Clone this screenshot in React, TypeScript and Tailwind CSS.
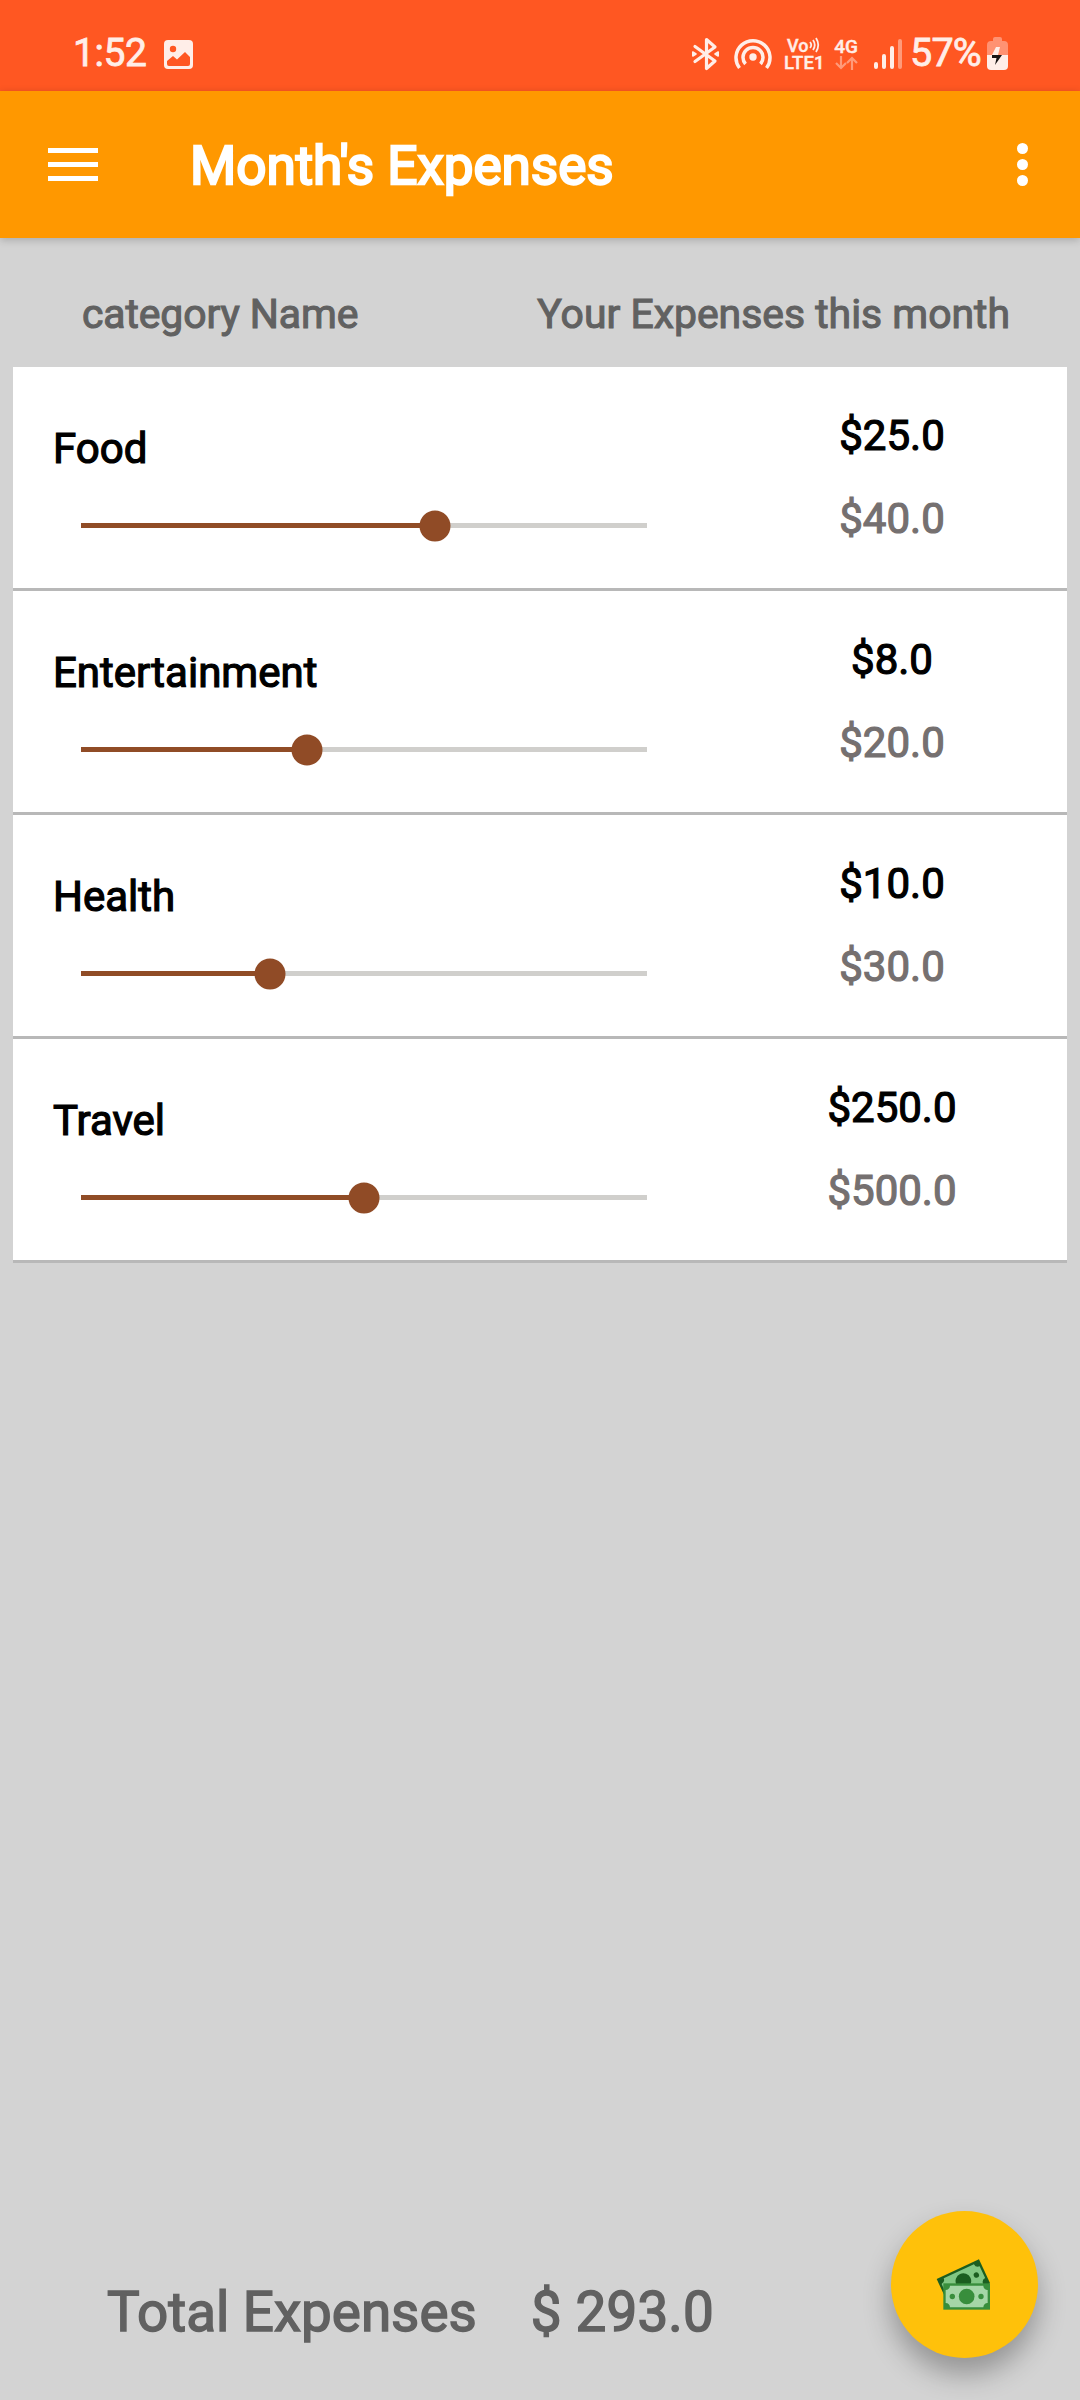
import React from "react";

type Category = { name: string; spent: number; budget: number };

const categories: Category[] = [
  { name: "Food", spent: 25, budget: 40 },
  { name: "Entertainment", spent: 8, budget: 20 },
  { name: "Health", spent: 10, budget: 30 },
  { name: "Travel", spent: 250, budget: 500 },
];

function StatusBar() {
  return (
    <header className="flex h-[91px] items-center bg-[#ff5722] pt-[16px] text-[#ffeee8]">
      <span className="mb-px ml-[73px] w-[74px] whitespace-nowrap text-[39px] leading-[40px] tracking-[-0.4px] [-webkit-text-stroke:0.8px_#ffeee8]">1:52</span>
      <svg className="ml-[17px] mt-[1px] h-[29px] w-[29px]" viewBox="0 0 29 29">
        <rect width="29" height="29" rx="4" fill="#ffeee8" />
        <circle cx="9" cy="9" r="3.2" fill="#ff5722" />
        <path d="M3 24V21L9 16L13 19.5L21 12L26 17V24Q26 26 24 26H5Q3 26 3 24Z" fill="#ff5722" />
      </svg>
      <svg className="ml-[498px] h-[34px] w-[29px]" viewBox="0 0 29 34" fill="none" stroke="#ffeee8" strokeWidth="3.200" strokeLinejoin="round" strokeLinecap="round">
        <path d="M4 9.500L24 24L15.500 31.500V2.500L24 10L4 24.500" />
        <path d="M1.800 15V19L5 17ZM27.200 15V19L24 17Z" strokeWidth="1.600" fill="#ffeee8" />
      </svg>
      <svg className="ml-[14px] h-[34px] w-[38px]" viewBox="0 0 38 34" fill="none" stroke="#ffeee8" strokeWidth="3.500">
        <path d="M5.500 31A17 17 0 1 1 32.500 31" />
        <path d="M11.500 27A10 10 0 1 1 26.500 27" />
        <circle cx="19" cy="20" r="3.700" fill="#ffeee8" stroke="none" />
      </svg>
      <div className="ml-[12px] flex w-[39px] flex-col whitespace-nowrap font-medium [-webkit-text-stroke:0.4px_#ffeee8]">
        <div className="flex h-[17px] items-center pl-[3px] text-[18px] leading-[17px]">
          Vo
          <svg className="ml-[1px] h-[16px] w-[11px]" viewBox="0 0 11 16" fill="none" stroke="#ffeee8" strokeWidth="1.800">
            <path d="M1 5Q3.500 8 1 11M4 3Q7.500 8 4 13M7 1Q11.500 8 7 15" />
          </svg>
        </div>
        <span className="h-[17px] text-[18.5px] leading-[19px] tracking-[0.2px]">LTE1</span>
      </div>
      <div className="ml-[10px] flex w-[26px] flex-col items-center font-medium [-webkit-text-stroke:0.4px_#ffeee8]">
        <span className="h-[18px] text-[19px] leading-[17px]">4G</span>
        <svg className="h-[14px] w-[24px]" viewBox="0 0 24 14" fill="none" stroke="#ff9a7a" strokeWidth="2.200">
          <path d="M7 0V12M2 7L7 12L12 7M18 14V2M13 7L18 2L23 7" />
        </svg>
      </div>
      <svg className="ml-[15px] h-[30px] w-[29px]" viewBox="0 0 29 30" strokeWidth="4" strokeLinecap="round" stroke="#ffeee8">
        <path d="M2 25V28M10 17V28M18 9V28" />
        <path d="M26 2V28" stroke="#ff9a7a" />
      </svg>
      <span className="mb-px ml-[7px] w-[73px] whitespace-nowrap text-[39.5px] leading-[40px] tracking-[-0.8px] [-webkit-text-stroke:0.8px_#ffeee8]">57%</span>
      <svg className="ml-[4px] h-[33px] w-[21px]" viewBox="0 0 21 33">
        <path d="M6 4V2Q6 0 8 0H13Q15 0 15 2V4H17Q21 4 21 8V18H0V8Q0 4 4 4Z" fill="#ff9272" />
        <path d="M0 18H21V29Q21 33 17 33H4Q0 33 0 29Z" fill="#ffeee8" />
        <path d="M9 10H13L11 18H5Z" fill="#ffeee8" />
        <path d="M5 18H15L8 28L9.500 21H5Z" fill="#181414" />
      </svg>
    </header>
  );
}

function AppBar() {
  return (
    <nav className="relative z-10 flex h-[147px] items-center bg-[#ff9800] text-white shadow-[0_2px_8px_rgba(0,0,0,0.2)]">
      <button aria-label="Open menu" className="ml-[48px] flex w-[50px] flex-col gap-[9px]">
        <span className="h-[5px] bg-white" />
        <span className="h-[5px] bg-white" />
        <span className="h-[5px] bg-white" />
      </button>
      <h1 className="ml-[92px] mt-[2px] whitespace-nowrap text-[53px] leading-[60px] [-webkit-text-stroke:2.3px_#fff]">Month's Expenses</h1>
      <button aria-label="More options" className="ml-auto mr-[52px] flex w-[11px] flex-col gap-[5px]">
        <span className="h-[11px] rounded-full bg-white" />
        <span className="h-[11px] rounded-full bg-white" />
        <span className="h-[11px] rounded-full bg-white" />
      </button>
    </nav>
  );
}

function BudgetSlider({ ratio }: { ratio: number }) {
  const percent = `${ratio * 100}%`;
  return (
    <div className="relative ml-[42px] h-[5px] w-[566px] bg-[#d0cfcc]">
      <div className="h-full bg-[#904c26]" style={{ width: percent }} />
      <div className="absolute top-1/2 h-[31px] w-[31px] -translate-x-1/2 -translate-y-1/2 rounded-full bg-[#904b26]" style={{ left: percent }} />
    </div>
  );
}

function CategoryRow({ name, spent, budget }: Category) {
  return (
    <li className="flex h-[224px] border-b-[3px] border-[#b8b8b8] bg-white pl-[26px] text-[42px] leading-[52px]">
      <div className="flex w-[650px] flex-col pt-[56px]">
        <span className="h-[100px] pl-[14px] text-black [-webkit-text-stroke:1.2px_#000]">{name}</span>
        <BudgetSlider ratio={spent / budget} />
      </div>
      <div className="ml-[85px] flex w-[236px] flex-col items-center gap-[31px] pt-[43px]">
        <span className="text-black [-webkit-text-stroke:1.2px_#000]">${spent.toFixed(1)}</span>
        <span className="text-[#757070] [-webkit-text-stroke:1.2px_#757070]">${budget.toFixed(1)}</span>
      </div>
    </li>
  );
}

/** One banknote, 140 by 79 units, with notched corners and three seals. */
function Banknote({ dark, light, transform }: { dark: string; light: string; transform: string }) {
  return (
    <g transform={transform}>
      <rect width="140" height="79" fill={dark} />
      <path
        d="M20 7H120A14 14 0 0 0 133 20V59A14 14 0 0 0 120 72H20A14 14 0 0 0 7 59V20A14 14 0 0 0 20 7Z"
        fill={light}
      />
      <circle cx="70" cy="39.500" r="23.500" fill={dark} />
      <circle cx="27" cy="39.500" r="8" fill={dark} />
      <circle cx="113" cy="39.500" r="8" fill={dark} />
    </g>
  );
}

function MoneyIcon() {
  return (
    <svg className="h-[64px] w-[64px]" viewBox="-5 9 192 192">
      <Banknote dark="#1b5e20" light="#81c784" transform="translate(6 87) rotate(-25)" />
      <Banknote dark="#388e3c" light="#a5d6a7" transform="translate(26 100)" />
    </svg>
  );
}

export default function App() {
  const total = categories.reduce((sum, c) => sum + c.spent, 0);
  return (
    <div className="flex h-[2400px] w-[1080px] flex-col overflow-hidden bg-[#d3d3d3] font-['Roboto',sans-serif]">
      <StatusBar />
      <AppBar />
      <main className="flex grow flex-col px-[13px]">
        <div className="flex h-[129px] justify-between pl-[69px] pr-[57px] pt-[52px] text-[40.9px] leading-[48px] text-[#616161] [-webkit-text-stroke:1.1px_#616161]">
          <span className="tracking-[-0.1px]">category Name</span>
          <span>Your Expenses this month</span>
        </div>
        <ul>
          {categories.map((c) => (
            <CategoryRow key={c.name} {...c} />
          ))}
        </ul>
        <footer className="mb-[42px] mt-auto flex h-[147px] items-center pl-[94px] pr-[29px] text-[54.75px] leading-[64px] text-[#616161] [-webkit-text-stroke:1.5px_#616161]">
          <span className="mt-[54px]">Total Expenses</span>
          <span className="ml-[54px] mt-[54px] tracking-[0.2px]">$ {total.toFixed(1)}</span>
          <button aria-label="Add expense" className="ml-auto flex h-[147px] w-[147px] items-center justify-center rounded-full bg-[#ffc10a] shadow-[0_16px_28px_rgba(0,0,0,0.3)]">
            <MoneyIcon />
          </button>
        </footer>
      </main>
    </div>
  );
}
